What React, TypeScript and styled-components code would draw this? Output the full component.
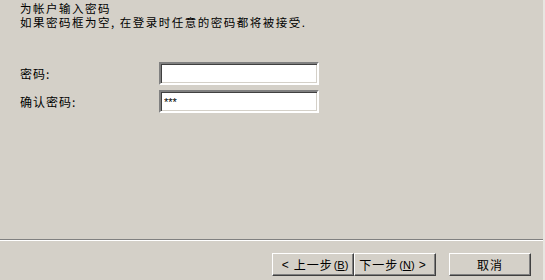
import styled, { createGlobalStyle } from "styled-components";

const GlobalStyle = createGlobalStyle`
  html, body {
    margin: 0;
    padding: 0;
    background: #d4d0c8;
  }
  body {
    font-family: "SimSun", "Noto Sans CJK SC", "Liberation Sans", sans-serif;
    font-size: 12px;
    color: #000;
  }
`;

const Janela = styled.div`
  width: 545px;
  height: 280px;
  display: flex;
  flex-direction: column;
  background: #d4d0c8;
  box-sizing: border-box;
  border-right: 2px solid #e8e6e1;
  overflow: hidden;
`;

const Cabecalho = styled.div`
  padding: 2px 0 0 20px;
`;

const Linha = styled.div`
  font-size: 11.5px;
  line-height: 13.5px;
  letter-spacing: 1.5px;
`;

const Formulario = styled.div`
  display: grid;
  grid-template-columns: 139px 160px;
  row-gap: 5px;
  align-items: center;
  margin: 33px 0 0 20px;
`;

const Rotulo = styled.label`
  font-size: 12px;
  line-height: 14px;
  letter-spacing: 1px;
`;

const Campo = styled.input`
  box-sizing: border-box;
  height: 23px;
  width: 160px;
  margin: 0;
  padding: 0 3px;
  background: #fff;
  font-family: "Liberation Sans", sans-serif;
  font-size: 11px;
  border-style: solid;
  border-width: 2px;
  border-color: #808080 #ffffff #ffffff #808080;
  box-shadow: inset 1px 1px 0 #404040, inset -1px -1px 0 #d4d0c8;
  outline: none;
`;

const Espaco = styled.div`
  flex: 1;
`;

const Separador = styled.div`
  height: 0;
  border-top: 1px solid #808080;
  border-bottom: 1px solid #ffffff;
`;

const Rodape = styled.div`
  display: flex;
  justify-content: flex-end;
  padding: 12px 12px 4px 0;
`;

const Grupo = styled.div`
  display: flex;
  margin-right: 13px;
`;

const Botao = styled.button`
  box-sizing: border-box;
  width: 82px;
  height: 23px;
  margin: 0;
  padding: 0;
  background: #d4d0c8;
  font-family: "SimSun", "Noto Sans CJK SC", "Liberation Sans", sans-serif;
  font-size: 12px;
  letter-spacing: 1px;
  color: #000;
  border: 1px solid;
  border-color: #ffffff #404040 #404040 #ffffff;
  box-shadow: inset -1px -1px 0 #808080;
  display: flex;
  align-items: center;
  justify-content: center;
  white-space: nowrap;
`;

const Seta = styled.span`
  font-family: "Liberation Sans", sans-serif;
  font-size: 12px;
  margin: 0 4px;
`;

const Atalho = styled.span`
  font-family: "Liberation Sans", sans-serif;
  font-size: 11px;
  letter-spacing: 0;
  margin-left: 1px;
  u {
    text-decoration: underline;
  }
`;

export default function App() {
  return (
    <>
      <GlobalStyle />
      <Janela>
        <Cabecalho>
          <Linha>为帐户输入密码</Linha>
          <Linha>如果密码框为空, 在登录时任意的密码都将被接受.</Linha>
        </Cabecalho>
        <Formulario>
          <Rotulo>密码:</Rotulo>
          <Campo type="text" defaultValue="" />
          <Rotulo>确认密码:</Rotulo>
          <Campo type="text" defaultValue="***" />
        </Formulario>
        <Espaco />
        <Separador />
        <Rodape>
          <Grupo>
            <Botao>
              <Seta>&lt;</Seta>上一步<Atalho>(<u>B</u>)</Atalho>
            </Botao>
            <Botao>
              下一步<Atalho>(<u>N</u>)</Atalho>
              <Seta>&gt;</Seta>
            </Botao>
          </Grupo>
          <Botao>取消</Botao>
        </Rodape>
      </Janela>
    </>
  );
}
